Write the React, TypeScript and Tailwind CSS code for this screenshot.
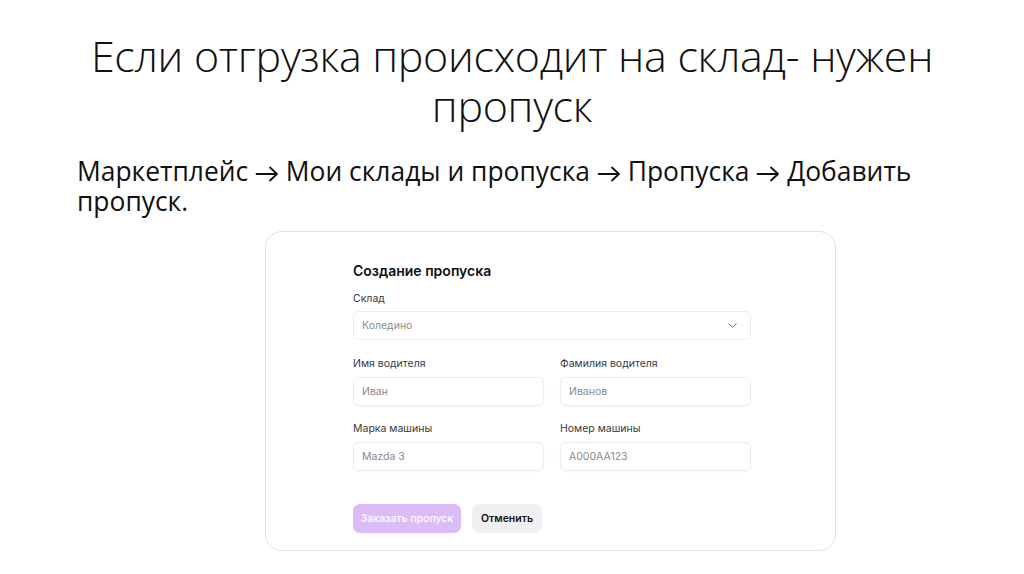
import { ChevronDown } from "lucide-react";

function Field({ label, value }: { label: string; value: string }) {
  return (
    <div className="flex flex-col">
      <span className="text-[10.5px] leading-[14px] text-[#3a3a3a]">{label}</span>
      <div className="mt-[6px] h-[29px] rounded-[6px] border border-[#ececec] flex items-center px-[8px] text-[10.5px] text-[#8a8a8a] shadow-[0_1px_2px_rgba(0,0,0,0.03)]">
        {value}
      </div>
    </div>
  );
}

function Arrow() {
  return (
    <svg
      width="24"
      height="16"
      viewBox="0 0 24 16"
      className="inline-block align-[-1px]"
      fill="none"
      stroke="#111"
      strokeWidth="1.8"
      strokeLinecap="round"
      strokeLinejoin="round"
    >
      <path d="M1.5 8H22M15 1.5L22 8L15 14.5" />
    </svg>
  );
}

export default function App() {
  return (
    <div className="w-[1024px] h-[574px] bg-white overflow-hidden relative">
      <h1
        className="pt-[31px] text-center text-[43px] leading-[50px] font-[350] text-[#111] tracking-[-0.3px]"
        style={{ fontFamily: '"Open Sans", sans-serif' }}
      >
        Если отгрузка происходит на склад- нужен
        <br />
        пропуск
      </h1>

      <p
        className="mt-[25px] ml-[77px] w-[900px] text-[26.4px] leading-[30px] text-[#111]"
        style={{ fontFamily: '"Open Sans", sans-serif' }}
      >
        Маркетплейс <Arrow /> Мои склады и пропуска <Arrow /> Пропуска <Arrow /> Добавить
        <br />
        пропуск.
      </p>

      <div
        className="mt-[15px] ml-[265px] w-[571px] h-[320px] rounded-[16px] border border-[#e4e4e4] pl-[87px] pt-[30px]"
        style={{ fontFamily: "Inter, sans-serif" }}
      >
        <div className="w-[398px]">
          <div className="text-[14px] leading-[18px] font-semibold text-[#111]">Создание пропуска</div>

          <div className="mt-[12px] text-[10.5px] leading-[14px] text-[#3a3a3a]">Склад</div>
          <div className="mt-[5px] h-[29px] rounded-[6px] border border-[#ececec] flex items-center justify-between px-[8px] text-[10.5px] text-[#8a8a8a]">
            <span>Коледино</span>
            <ChevronDown size={15} strokeWidth={1.5} className="text-[#666] mr-[2px]" />
          </div>

          <div className="mt-[17px] grid grid-cols-2 gap-x-[16px] gap-y-[16px]">
            <Field label="Имя водителя" value="Иван" />
            <Field label="Фамилия водителя" value="Иванов" />
            <Field label="Марка машины" value="Mazda 3" />
            <Field label="Номер машины" value="A000AA123" />
          </div>

          <div className="mt-[33px] flex gap-[11px]">
            <button className="h-[29px] w-[108px] rounded-[7px] bg-[#dcbcf6] text-white text-[10.5px] font-medium">
              Заказать пропуск
            </button>
            <button className="h-[29px] w-[70px] rounded-[7px] bg-[#f0f0f0] text-[#111] text-[10.5px] font-semibold">
              Отменить
            </button>
          </div>
        </div>
      </div>
    </div>
  );
}
